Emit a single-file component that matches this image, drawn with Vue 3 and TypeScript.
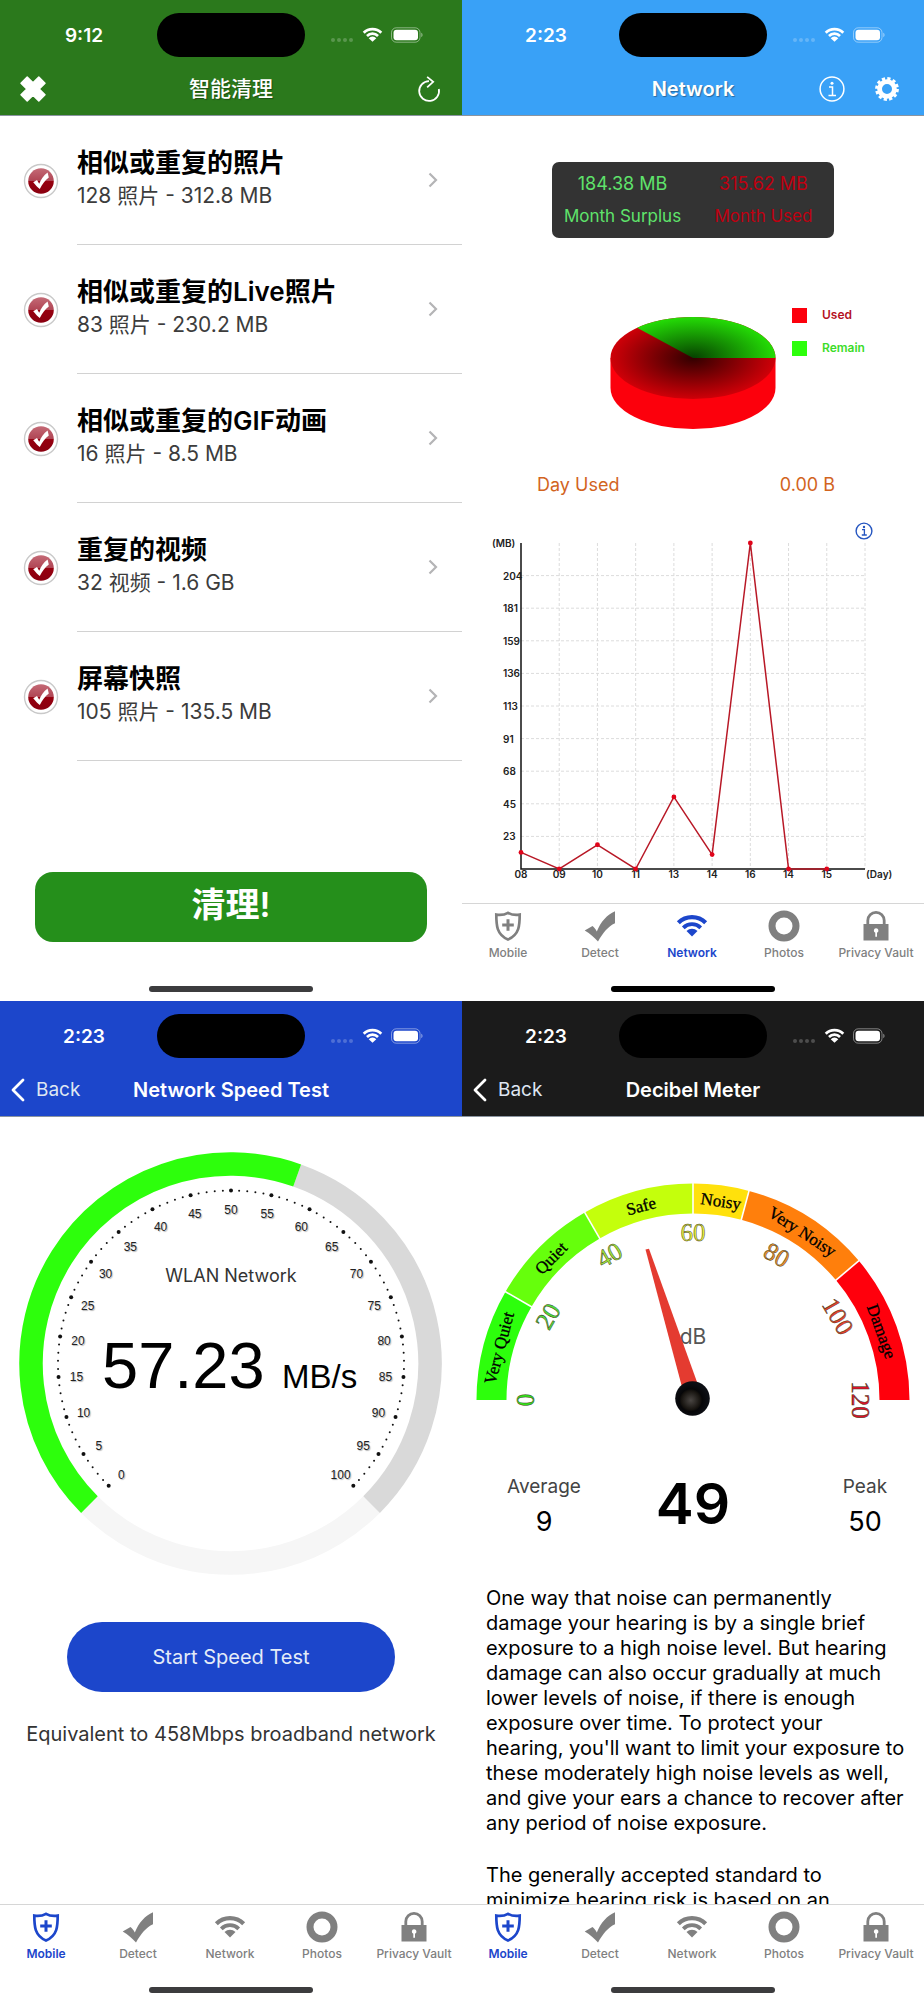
<script setup lang="ts">
import { ref } from 'vue'

type ScreenId = 'clean' | 'network' | 'speed' | 'decibel'

interface Screen {
  id: ScreenId
  time: string
  title: string
  tab?: string
}

const screens: Screen[] = [
  { id: 'clean', time: '9:12', title: '智能清理' },
  { id: 'network', time: '2:23', title: 'Network', tab: 'Network' },
  { id: 'speed', time: '2:23', title: 'Network Speed Test', tab: 'Mobile' },
  { id: 'decibel', time: '2:23', title: 'Decibel Meter', tab: 'Mobile' },
]

const tabs = ['Mobile', 'Detect', 'Network', 'Photos', 'Privacy Vault']

const groups = ref([
  { name: '相似或重复的照片', detail: '128 照片 - 312.8 MB', checked: true },
  { name: '相似或重复的Live照片', detail: '83 照片 - 230.2 MB', checked: true },
  { name: '相似或重复的GIF动画', detail: '16 照片 - 8.5 MB', checked: true },
  { name: '重复的视频', detail: '32 视频 - 1.6 GB', checked: true },
  { name: '屏幕快照', detail: '105 照片 - 135.5 MB', checked: true },
])

const reading = [
  `One way that noise can permanently
damage your hearing is by a single brief
exposure to a high noise level. But hearing
damage can also occur gradually at much
lower levels of noise, if there is enough
exposure over time. To protect your
hearing, you'll want to limit your exposure to
these moderately high noise levels as well,
and give your ears a chance to recover after
any period of noise exposure.`,
  `The generally accepted standard to
minimize hearing risk is based on an`,
]

function polar(cx: number, cy: number, r: number, deg: number) {
  const a = (deg * Math.PI) / 180
  return { x: cx + r * Math.sin(a), y: cy - r * Math.cos(a) }
}

/* Arc between two clockwise angles, where 0 points straight up. */
function arc(cx: number, cy: number, r: number, from: number, to: number) {
  const a = polar(cx, cy, r, from)
  const b = polar(cx, cy, r, to)
  return `M${a.x.toFixed(2)} ${a.y.toFixed(2)}A${r} ${r} 0 ${to - from > 180 ? 1 : 0} 1 ${b.x.toFixed(2)} ${b.y.toFixed(2)}`
}

/* Daily traffic chart */
const chart = { left: 59, right: 403, top: 0, bottom: 326 }
const days = ['08', '09', '10', '11', '13', '14', '16', '14', '15']
const levels = [204, 181, 159, 136, 113, 91, 68, 45, 23]
const usage = [11.5, 0, 16.8, 0, 50, 10, 226, 0, 0]
const colX = (i: number) => chart.left + ((chart.right - chart.left) / 9) * i
const rowY = (i: number) => chart.top + ((chart.bottom - chart.top) / 10) * i
const points = usage.map((v, i) => ({ x: colX(i), y: chart.bottom - (v / 226) * chart.bottom }))
const polyline = points.map((p) => `${p.x},${p.y}`).join(' ')

/* Speed dial */
const speed = 57.23
const sweep = (v: number) => -135 + v * 2.7
const ticks = Array.from({ length: 101 }, (_, i) => ({
  ...polar(231, 246.5, 173, sweep(i)),
  r: i % 5 === 0 ? 2 : 1,
}))
const dialLabels = Array.from({ length: 21 }, (_, i) => ({
  ...polar(231, 248, 155, sweep(i * 5)),
  text: i * 5,
}))

/* Decibel dial */
const zones = [
  { name: 'Very Quiet', from: -90, to: -60, at: -75, color: '#2dff0c' },
  { name: 'Quiet', from: -60, to: -30, at: -45, color: '#66ff0c' },
  { name: 'Safe', from: -30, to: 0, at: -15, color: '#c4ff0c' },
  { name: 'Noisy', from: 0, to: 15, at: 8, color: '#ffe10c' },
  { name: 'Very Noisy', from: 15, to: 50, at: 33, color: '#ff7f0c' },
  { name: 'Damage', from: 50, to: 90, at: 70, color: '#ff000c' },
]
const marks = [
  { value: 0, color: '#35e31c' },
  { value: 20, color: '#4fdf3a' },
  { value: 40, color: '#a2e83a' },
  { value: 60, color: '#eaf03a' },
  { value: 80, color: '#f0922e' },
  { value: 100, color: '#e8402c' },
  { value: 120, color: '#e0102a' },
]
function rotated(r: number, deg: number) {
  const p = polar(231, 283, r, deg)
  return `translate(${p.x.toFixed(2)} ${p.y.toFixed(2)}) rotate(${deg})`
}
</script>

<template>
  <main class="board">
    <section v-for="s in screens" :key="s.id" class="screen" :class="s.id">
      <header class="top">
        <div class="status">
          <span class="time">{{ s.time }}</span>
          <span class="island"></span>
          <svg class="signals" viewBox="0 0 94 18" aria-hidden="true">
            <g fill="#fff" opacity=".22">
              <circle cx="4" cy="14" r="2" /><circle cx="10" cy="14" r="2" />
              <circle cx="16" cy="14" r="2" /><circle cx="22" cy="14" r="2" />
            </g>
            <g fill="none" stroke="#fff">
              <path :d="arc(43.5, 15.5, 12.4, -45, 45)" stroke-width="2.8" />
              <path :d="arc(43.5, 15.5, 7.8, -45, 45)" stroke-width="2.7" />
            </g>
            <path d="M43.5 15.7L39.7 12.2A5.2 5.2 0 0 1 47.3 12.2Z" fill="#fff" />
            <rect x="62.5" y="1.8" width="28.5" height="14.4" rx="4.8" fill="none" stroke="#fff" opacity=".45" />
            <rect x="64.5" y="3.8" width="24.5" height="10.4" rx="3" fill="#fff" />
            <path d="M92.3 6.8c1.6.6 1.6 3.8 0 4.4z" fill="#fff" opacity=".5" />
          </svg>
        </div>
        <div class="bar">
          <button v-if="s.id === 'clean'" class="icon-btn close" type="button" aria-label="Close">
            <svg viewBox="0 0 26 26"><path d="M7.200 1L13 6.800L18.800 1L25 7.200L19.200 13L25 18.800L18.800 25L13 19.200L7.200 25L1 18.800L6.800 13L1 7.200Z" fill="#fff" stroke="#fff" stroke-width="1.500" stroke-linejoin="round" /></svg>
          </button>
          <button v-if="s.id === 'speed' || s.id === 'decibel'" class="back" type="button">
            <svg viewBox="0 0 14 24" aria-hidden="true"><path d="M12 2L2 12L12 22" fill="none" stroke="#fff" stroke-width="2.8" stroke-linecap="round" stroke-linejoin="round" /></svg>
            Back
          </button>
          <h1>{{ s.title }}</h1>
          <div class="actions">
            <button v-if="s.id === 'clean'" class="icon-btn" type="button" aria-label="Refresh">
              <svg viewBox="0 0 26 28" fill="none" stroke="#fff" stroke-width="1.9"><path d="M13 5.5A10.7 10.7 0 1 0 23.6 14M11 1L17.5 6.3L11 12.3" /></svg>
            </button>
            <template v-if="s.id === 'network'">
              <button class="icon-btn" type="button" aria-label="Information">
                <svg viewBox="0 0 26 26"><circle cx="13" cy="13" r="11.9" fill="none" stroke="#fff" stroke-width="1.5" /><circle cx="13" cy="7.2" r="1.5" fill="#fff" /><path d="M10 11H13.5V19.5M9.5 19.5H17" fill="none" stroke="#fff" stroke-width="1.5" /></svg>
              </button>
              <button class="icon-btn" type="button" aria-label="Settings">
                <svg viewBox="0 0 26 26" fill="none" stroke="#fff"><circle cx="13" cy="13" r="7.400" stroke-width="4.800" /><circle cx="13" cy="13" r="10.400" stroke-width="3" stroke-dasharray="3.200 2.245" /></svg>
              </button>
            </template>
          </div>
        </div>
      </header>

      <template v-if="s.id === 'clean'">
        <ul class="groups">
          <li v-for="g in groups" :key="g.name">
            <label class="tick">
              <input v-model="g.checked" type="checkbox" :aria-label="g.name" />
              <svg viewBox="0 0 36 36" aria-hidden="true">
                <defs>
                  <linearGradient id="gloss" x1="0" y1="0" x2="0" y2="1">
                    <stop offset="0" stop-color="#c46a76" /><stop offset=".5" stop-color="#b04554" />
                    <stop offset=".52" stop-color="#96000f" /><stop offset="1" stop-color="#8a0010" />
                  </linearGradient>
                </defs>
                <circle cx="18" cy="18" r="16.5" fill="#fff" stroke="#c9c9c9" stroke-width="1.4" />
                <circle cx="18" cy="18" r="12.8" fill="url(#gloss)" />
                <path v-if="g.checked" d="M10.2 19.2L14 17L16.2 20.8C18 16.2 20.8 12.6 24.6 9.6L25.8 14.6C22 17.6 19.4 21 16.8 26C14.8 24.6 12.6 22 10.2 19.2Z" fill="#fff" />
              </svg>
            </label>
            <a class="entry" href="#">
              <span class="texts"><strong>{{ g.name }}</strong><span>{{ g.detail }}</span></span>
              <svg class="chev" viewBox="0 0 10 16" aria-hidden="true"><path d="M1.5 1.5L8 8L1.5 14.5" fill="none" stroke="#b4b4b6" stroke-width="2.2" /></svg>
            </a>
          </li>
        </ul>
        <button class="clean-btn" type="button">清理!</button>
      </template>

      <template v-if="s.id === 'network'">
        <dl class="card">
          <div class="left"><dd>184.38 MB</dd><dt>Month Surplus</dt></div>
          <div class="used"><dd>315.62 MB</dd><dt>Month Used</dt></div>
        </dl>
        <svg class="art" viewBox="0 0 462 230" role="img" aria-label="Used and remaining traffic">
          <defs>
            <radialGradient id="redTop"><stop offset="0" stop-color="#320000" /><stop offset="1" stop-color="#cf0008" /></radialGradient>
            <radialGradient id="greenTop"><stop offset="0" stop-color="#064000" /><stop offset="1" stop-color="#24dc06" /></radialGradient>
          </defs>
          <path d="M148.500 120V150A82.500 41 0 0 0 313.500 150V120Z" fill="#fc000c" />
          <ellipse cx="231" cy="120" rx="82.500" ry="41" fill="url(#redTop)" />
          <clipPath id="slice"><path d="M231 120H330V40H120L175.500 90Z" /></clipPath>
          <ellipse cx="231" cy="120" rx="82.500" ry="41" fill="url(#greenTop)" clip-path="url(#slice)" />
          <rect x="330" y="70" width="15" height="15" fill="#fc000c" />
          <rect x="330" y="103" width="15" height="15" fill="#2dff0c" />
          <text class="legend" x="360" y="81" fill="#b5121f">Used</text>
          <text class="legend" x="360" y="114" fill="#3ddc2a">Remain</text>
        </svg>
        <p class="day"><span>Day Used</span><span>0.00 B</span></p>
        <div class="chart-tools">
          <button type="button" aria-label="About this chart">
            <svg viewBox="0 0 18 18"><circle cx="9" cy="9" r="7.9" fill="none" stroke="#2455c0" stroke-width="1.400" /><circle cx="9" cy="5" r="1.200" fill="#2455c0" /><path d="M7 7.700H9.400V13M6.800 13H11.800" fill="none" stroke="#2455c0" stroke-width="1.300" /></svg>
          </button>
        </div>
        <svg class="art chart" viewBox="0 0 462 360" role="img" aria-label="Daily usage in MB">
          <g stroke="#dcdcdc" stroke-dasharray="3 2">
            <line v-for="i in 9" :key="'v' + i" :x1="colX(i)" :x2="colX(i)" y1="0" :y2="chart.bottom" />
            <line v-for="i in 9" :key="'h' + i" :x1="chart.left" :x2="chart.right" :y1="rowY(i)" :y2="rowY(i)" />
          </g>
          <path d="M59 0V326H403" fill="none" stroke="#111" stroke-width="1.500" />
          <g class="axis">
            <text x="30" y="4">(MB)</text>
            <text v-for="(l, i) in levels" :key="l" x="41" :y="rowY(i + 1) + 4">{{ l }}</text>
            <text v-for="(d, i) in days" :key="i" :x="colX(i)" y="335" text-anchor="middle">{{ d }}</text>
            <text x="404" y="335">(Day)</text>
          </g>
          <polyline :points="polyline" fill="none" stroke="#b81826" stroke-width="1.500" />
          <circle v-for="(p, i) in points" :key="i" :cx="p.x" :cy="p.y" r="2.400" fill="#e0041a" />
        </svg>
      </template>

      <template v-if="s.id === 'speed'">
        <svg class="art" viewBox="0 0 462 505" role="img" aria-label="57.23 MB/s">
          <g fill="none" stroke-width="23.500">
            <path :d="arc(230.5, 246.5, 199.5, 135, 225)" stroke="#f6f6f6" />
            <path :d="arc(230.5, 246.5, 199.5, sweep(speed), 135)" stroke="#d9d9d9" />
            <path :d="arc(230.5, 246.5, 199.5, -135, sweep(speed))" stroke="#2dff0c" />
          </g>
          <circle v-for="(t, i) in ticks" :key="i" :cx="t.x" :cy="t.y" :r="t.r" fill="#111" />
          <text v-for="l in dialLabels" :key="l.text" class="dial" :x="l.x" :y="l.y + 4">{{ l.text }}</text>
          <text class="net" x="231" y="165">WLAN Network</text>
          <text class="big" x="102" y="271">57.23</text>
          <text class="unit" x="282" y="271">MB/s</text>
        </svg>
        <button class="start" type="button">Start Speed Test</button>
        <p class="equal">Equivalent to 458Mbps broadband network</p>
      </template>

      <template v-if="s.id === 'decibel'">
        <svg class="art" viewBox="0 0 462 326" role="img" aria-label="49 decibels">
          <defs>
            <radialGradient id="hub" cx=".45" cy=".55"><stop offset="0" stop-color="#4a4643" /><stop offset=".55" stop-color="#16130f" /><stop offset=".66" stop-color="#060608" /><stop offset="1" stop-color="#0c0e13" /></radialGradient>
          </defs>
          <path v-for="z in zones" :key="z.name" :d="arc(231, 283, 201.5, z.from, z.to)" fill="none" :stroke="z.color" stroke-width="30" />
          <g stroke="#fff" stroke-width="1.600">
            <line v-for="z in zones.slice(1)" :key="z.name" x1="0" x2="0" y1="-16" y2="16" :transform="rotated(201.5, z.from)" />
          </g>
          <text v-for="z in zones" :key="z.name" class="zone" y="5" :transform="rotated(200, z.at)">{{ z.name }}</text>
          <text v-for="m in marks" :key="m.value" class="mark" y="8" :fill="m.color" :transform="rotated(167, m.value * 1.5 - 90)">{{ m.value }}</text>
          <text class="db" x="231" y="227">dB</text>
          <path d="M183.500 132.500L187 131.800L235 265L220 270Z" fill="#e43b30" />
          <circle cx="230.500" cy="281.500" r="17.300" fill="url(#hub)" />
        </svg>
        <dl class="stats">
          <div><dt>Average</dt><dd>9</dd></div>
          <div class="now"><dd>49</dd></div>
          <div class="peak"><dt>Peak</dt><dd>50</dd></div>
        </dl>
        <div class="reading">
          <p v-for="p in reading" :key="p">{{ p }}</p>
        </div>
      </template>

      <nav v-if="s.tab" class="tabs">
        <a v-for="t in tabs" :key="t" href="#" :class="{ on: t === s.tab }">
          <svg viewBox="0 0 32 32" aria-hidden="true">
            <g v-if="t === 'Mobile'" fill="none" stroke="currentColor">
              <path d="M16 2.800C12.500 4.800 8 5.200 4.300 4.600C4.300 15 4.500 24.500 16 29.500C27.500 24.500 27.700 15 27.700 4.600C24 5.200 19.500 4.800 16 2.800Z" stroke-width="2.700" />
              <path d="M16 9.200V20.800M10.200 15H21.800" stroke-width="3" />
            </g>
            <path v-else-if="t === 'Detect'" d="M.7 20.500L8.500 16C10.500 17.500 11.500 19 12.800 21.500C17 11.500 23 4.500 31 1.200V13.300C24 16.500 19 23 14 31.500C10 27.500 6.500 23.500 .7 20.500Z" fill="currentColor" />
            <g v-else-if="t === 'Network'">
              <g fill="none" stroke="currentColor"><path :d="arc(16, 26.5, 19.3, -45, 45)" stroke-width="4.200" /><path :d="arc(16, 26.5, 12.3, -45, 45)" stroke-width="3.800" /></g>
              <path d="M16 26.500L10.500 21A8 8 0 0 1 21.500 21Z" fill="currentColor" />
            </g>
            <circle v-else-if="t === 'Photos'" cx="16" cy="16" r="12" fill="none" stroke="currentColor" stroke-width="7" />
            <g v-else>
              <path d="M7.800 15V10.500A8.200 8.200 0 0 1 24.200 10.500V15" fill="none" stroke="currentColor" stroke-width="2.800" />
              <rect x="3.500" y="14" width="25" height="16.500" fill="currentColor" />
              <path d="M16 18.200A2.400 2.400 0 0 1 17 22.800V26.800H15.300V22.800A2.400 2.400 0 0 1 16 18.200Z" fill="#fff" />
            </g>
          </svg>
          <span>{{ t }}</span>
        </a>
      </nav>
      <div class="home"></div>
    </section>
  </main>
</template>

<style>
body {
  margin: 0;
  background: #fff;
}
</style>

<style scoped>
.board {
  display: grid;
  grid-template-columns: 1fr 1fr;
  font-family: Inter, "Noto Sans CJK SC", sans-serif;
  color: #000;
}
.screen {
  display: flex;
  flex-direction: column;
  min-width: 0;
  background: #fff;
  padding-bottom: 7px;
}
.clean,
.network {
  padding-bottom: 9px;
}
button {
  font: inherit;
  color: inherit;
  background: none;
  border: 0;
  padding: 0;
}
a {
  color: inherit;
  text-decoration: none;
}
svg {
  display: block;
}
dl,
dd,
p,
ul,
h1 {
  margin: 0;
  padding: 0;
}
.art {
  width: 100%;
  height: auto;
}

.top {
  color: #fff;
  padding-top: 13px;
  border-bottom: 1px solid #8a94a0;
}
.clean .top {
  background: #2b791c;
}
.network .top {
  background: #39a1f7;
}
.speed .top {
  background: #1c46cb;
}
.decibel .top {
  background: #1b1b1b;
}
.status {
  display: grid;
  grid-template-columns: 1fr 148px 1fr;
  align-items: center;
}
.time {
  font-size: 19px;
  font-weight: 600;
  text-align: center;
  padding-left: 11px;
}
.island {
  height: 44px;
  border-radius: 22px;
  background: #000;
}
.signals {
  width: 94px;
  height: 18px;
  margin-left: 24px;
}
.bar {
  display: grid;
  grid-template-columns: 1fr auto 1fr;
  align-items: center;
  height: 58px;
}
.bar h1 {
  grid-column: 2;
  grid-row: 1;
  font-size: 20px;
  font-weight: 600;
  line-height: 28px;
  padding-top: 5px;
}
.clean h1 {
  font-size: 21px;
  font-weight: 500;
}
.clean h1,
.network h1 {
  text-shadow: 1px 1px 1px rgba(0, 0, 0, 0.35);
}
.close,
.back {
  grid-column: 1;
  grid-row: 1;
  justify-self: start;
}
.icon-btn svg {
  width: 26px;
  height: 26px;
  overflow: visible;
}
.close {
  margin-left: 20px;
  padding-top: 5px;
}
.back {
  display: flex;
  align-items: center;
  gap: 11px;
  padding: 5px 0 0 11px;
  font-size: 19px;
  color: #dfe6f2;
}
.back svg {
  width: 14px;
  height: 24px;
}
.actions {
  grid-column: 3;
  grid-row: 1;
  justify-self: end;
  display: flex;
  gap: 29px;
  padding: 5px 24px 0 0;
}
.clean .actions {
  padding-right: 20px;
}

.groups {
  list-style: none;
}
.groups li {
  display: grid;
  grid-template-columns: 77px 1fr;
  height: 129px;
}
.tick {
  position: relative;
  display: flex;
  align-items: center;
  padding-left: 23px;
}
.tick input {
  position: absolute;
  opacity: 0;
  margin: 0;
}
.tick svg {
  width: 36px;
  height: 36px;
}
.entry {
  display: flex;
  align-items: center;
  justify-content: space-between;
  border-bottom: 1px solid #d2d2d2;
  padding-right: 24px;
}
.texts {
  display: flex;
  flex-direction: column;
  font-size: 21px;
  line-height: 32px;
  padding-bottom: 2px;
  color: #3c3c3c;
}
.texts strong {
  font-size: 26px;
  font-weight: 600;
  line-height: 34px;
  color: #000;
}
.chev {
  width: 10px;
  height: 16px;
}
.clean-btn {
  margin: 111px 35px 44px;
  height: 70px;
  border-radius: 18px;
  background: #258f1b;
  color: #fff;
  font-size: 34px;
  font-weight: 600;
  line-height: 66px;
  padding-bottom: 4px;
}

.card {
  align-self: center;
  display: grid;
  grid-template-columns: 1fr 1fr;
  margin-top: 46px;
  width: 61%;
  height: 76px;
  border-radius: 7px;
  background: #333;
  font-size: 18px;
  line-height: 33px;
  padding-top: 5px;
  box-sizing: border-box;
  text-align: center;
}
.card dt {
  font-size: 17px;
}
.left {
  color: #5fe36b;
}
.used {
  color: #bf0010;
}
.legend {
  font-size: 12px;
  font-weight: 600;
}
.day {
  display: flex;
  justify-content: space-between;
  padding: 0 89px 0 75px;
  font-size: 18px;
  line-height: 34px;
  color: #d2641e;
}
.chart-tools {
  display: flex;
  justify-content: flex-end;
  padding: 20px 51px 3px 0;
}
.chart-tools svg {
  width: 18px;
  height: 18px;
}
.chart {
  overflow: visible;
}
.axis {
  font-size: 10px;
  font-weight: 600;
  fill: #222;
}

.dial,
.big,
.unit {
  font-family: "Liberation Sans", Arial, sans-serif;
}
.dial {
  font-size: 12px;
  fill: #222;
  text-anchor: middle;
  text-shadow: 1px 1px 1px rgba(0, 0, 0, 0.3);
}
.net {
  font-size: 18px;
  fill: #333;
  text-anchor: middle;
}
.big {
  font-size: 65px;
}
.unit {
  font-size: 33px;
}
.start {
  align-self: center;
  width: 71%;
  height: 70px;
  border-radius: 35px;
  background: #1c46cb;
  color: #e4ecf8;
  font-size: 20px;
}
.equal {
  margin: 27px 0 155px;
  text-align: center;
  font-size: 20px;
  line-height: 30px;
  color: #333;
}

.zone {
  font-family: "Liberation Serif", serif;
  font-size: 17px;
  text-anchor: middle;
  stroke: #000;
  stroke-width: 0.3px;
}
.mark {
  font-family: "Liberation Serif", serif;
  font-size: 25px;
  text-anchor: middle;
  stroke: #3c3c20;
  stroke-width: 0.5px;
}
.db {
  font-size: 21px;
  fill: #555;
  text-anchor: middle;
}
.stats {
  display: grid;
  grid-template-columns: 164fr 134fr 164fr;
  padding-top: 30px;
  text-align: center;
}
.stats dt {
  font-size: 19px;
  line-height: 28px;
  color: #444;
}
.stats dd {
  font-size: 27px;
  line-height: 42px;
}
.stats .now dd {
  font-size: 57px;
  font-weight: 600;
  line-height: 62px;
}
.peak {
  padding-left: 46px;
}
.reading {
  flex: 1 1 0;
  min-height: 0;
  overflow: hidden;
  padding: 0 8px 0 24px;
  margin-top: 43px;
  font-size: 20px;
  line-height: 25px;
  white-space: pre-line;
}
.reading p + p {
  margin-top: 27px;
}

.tabs {
  display: grid;
  grid-template-columns: repeat(5, 1fr);
  border-top: 1px solid #d6d6d6;
  padding: 6px 2px 25px 0;
  color: #808080;
}
.tabs a {
  display: flex;
  flex-direction: column;
  align-items: center;
  gap: 3px;
  font-size: 12px;
  font-weight: 500;
  line-height: 16px;
  white-space: nowrap;
}
.tabs svg {
  width: 32px;
  height: 32px;
}
.tabs .on {
  color: #1c46cb;
  font-weight: 600;
}
.home {
  align-self: center;
  width: 164px;
  height: 6px;
  border-radius: 3px;
  background: #3c3c3e;
}
.network .home {
  background: #000;
}
</style>
